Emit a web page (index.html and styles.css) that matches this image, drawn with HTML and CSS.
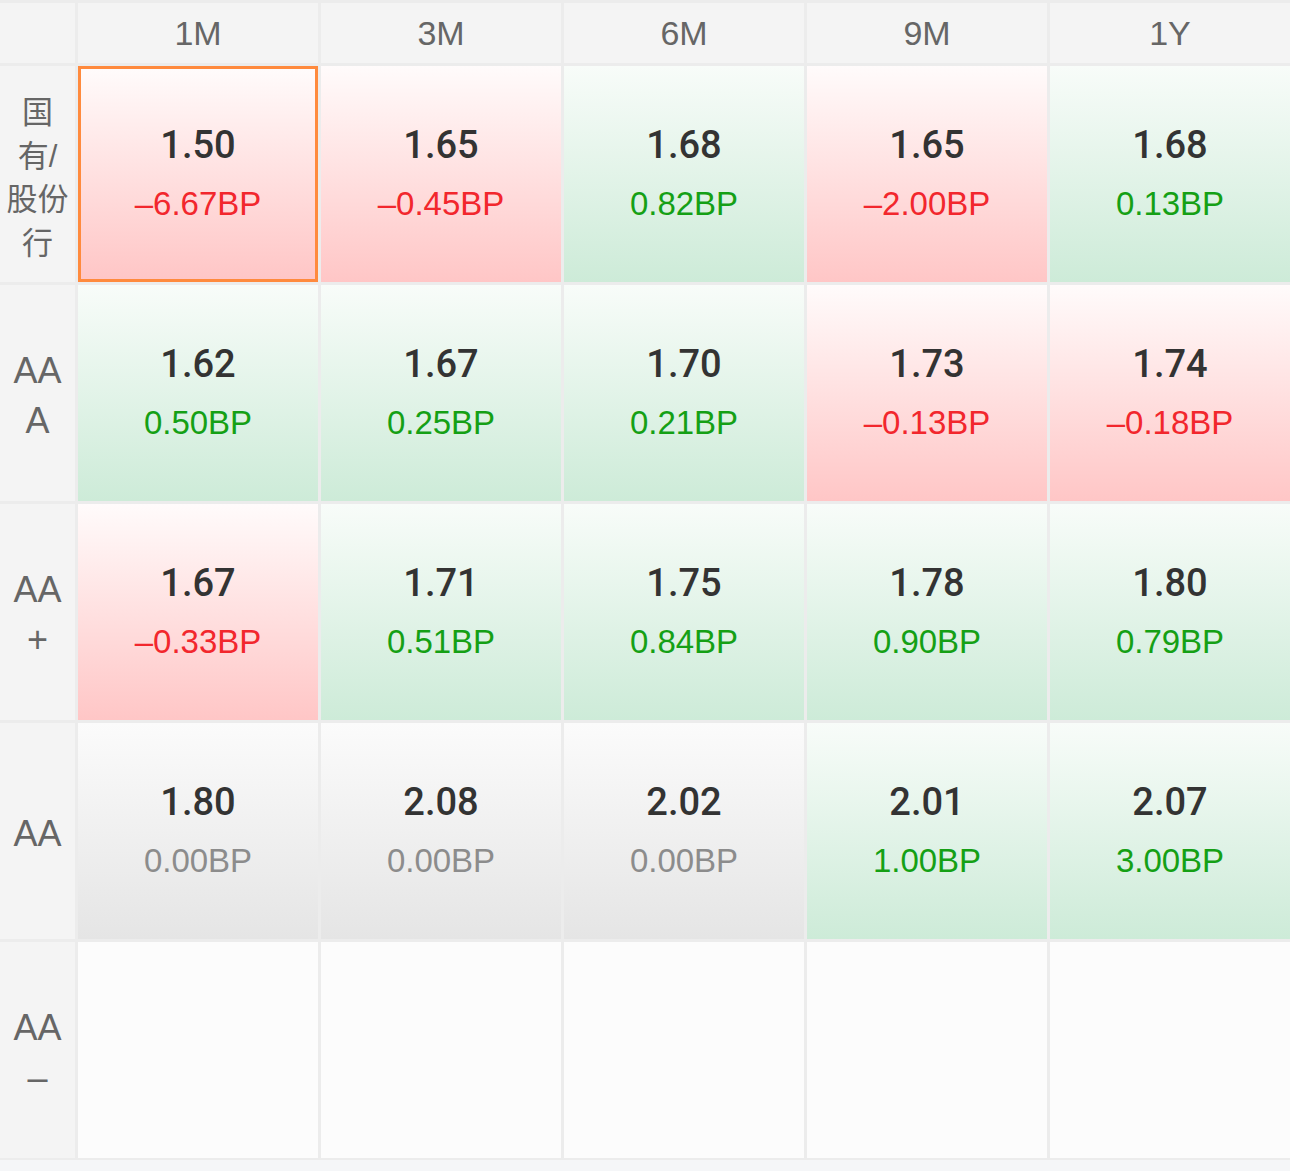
FILE: index.html
```html
<!DOCTYPE html>
<html lang="zh">
<head>
<meta charset="utf-8">
<title>收益率矩阵</title>
<link rel="stylesheet" href="styles.css">
</head>
<body>
<div class="matrix">
  <div class="corner"></div>
  <div class="col-head">1M</div>
  <div class="col-head">3M</div>
  <div class="col-head">6M</div>
  <div class="col-head">9M</div>
  <div class="col-head">1Y</div>

  <div class="row-head cjk">国<br>有/<br>股份<br>行</div>
  <div class="cell down selected"><div class="rate">1.50</div><div class="chg">–6.67BP</div></div>
  <div class="cell down"><div class="rate">1.65</div><div class="chg">–0.45BP</div></div>
  <div class="cell up"><div class="rate">1.68</div><div class="chg">0.82BP</div></div>
  <div class="cell down"><div class="rate">1.65</div><div class="chg">–2.00BP</div></div>
  <div class="cell up"><div class="rate">1.68</div><div class="chg">0.13BP</div></div>

  <div class="row-head">AA<br>A</div>
  <div class="cell up"><div class="rate">1.62</div><div class="chg">0.50BP</div></div>
  <div class="cell up"><div class="rate">1.67</div><div class="chg">0.25BP</div></div>
  <div class="cell up"><div class="rate">1.70</div><div class="chg">0.21BP</div></div>
  <div class="cell down"><div class="rate">1.73</div><div class="chg">–0.13BP</div></div>
  <div class="cell down"><div class="rate">1.74</div><div class="chg">–0.18BP</div></div>

  <div class="row-head">AA<br>+</div>
  <div class="cell down"><div class="rate">1.67</div><div class="chg">–0.33BP</div></div>
  <div class="cell up"><div class="rate">1.71</div><div class="chg">0.51BP</div></div>
  <div class="cell up"><div class="rate">1.75</div><div class="chg">0.84BP</div></div>
  <div class="cell up"><div class="rate">1.78</div><div class="chg">0.90BP</div></div>
  <div class="cell up"><div class="rate">1.80</div><div class="chg">0.79BP</div></div>

  <div class="row-head">AA</div>
  <div class="cell flat"><div class="rate">1.80</div><div class="chg">0.00BP</div></div>
  <div class="cell flat"><div class="rate">2.08</div><div class="chg">0.00BP</div></div>
  <div class="cell flat"><div class="rate">2.02</div><div class="chg">0.00BP</div></div>
  <div class="cell up"><div class="rate">2.01</div><div class="chg">1.00BP</div></div>
  <div class="cell up"><div class="rate">2.07</div><div class="chg">3.00BP</div></div>

  <div class="row-head">AA<br>–</div>
  <div class="cell empty"></div>
  <div class="cell empty"></div>
  <div class="cell empty"></div>
  <div class="cell empty"></div>
  <div class="cell empty"></div>
</div>
</body>
</html>
```
FILE: styles.css
```css
html, body {
  margin: 0;
  padding: 0;
  background: #f5f6f8;
}

body {
  font-family: "Liberation Sans", "Noto Sans CJK SC", sans-serif;
}

.matrix {
  display: grid;
  grid-template-columns: 75px repeat(5, 1fr);
  grid-template-rows: 60px repeat(5, 216px);
  column-gap: 3px;
  row-gap: 3px;
  padding: 3px 0 2px 0;
  background: #ececec;
}

.corner,
.col-head,
.row-head {
  background: #f4f4f4;
  color: #666;
}

.col-head {
  display: flex;
  align-items: center;
  justify-content: center;
  font-size: 34px;
}

.row-head {
  display: flex;
  align-items: center;
  justify-content: center;
  text-align: center;
  font-size: 36px;
  line-height: 50px;
  padding-top: 5px;
}

.row-head.cjk {
  font-size: 31px;
  line-height: 43.5px;
  padding-top: 8px;
}

.cell {
  display: flex;
  flex-direction: column;
  align-items: center;
  justify-content: center;
  box-sizing: border-box;
  padding-bottom: 2px;
}

.cell.up {
  background: linear-gradient(to bottom, #f8fcf9, #cdebd8);
}

.cell.down {
  background: linear-gradient(to bottom, #fffbfb, #ffc6c6);
}

.cell.flat {
  background: linear-gradient(to bottom, #fbfbfb, #e5e5e5);
}

.cell.empty {
  background: #fcfcfc;
}

.cell.selected {
  border: 3px solid #ff8a3d;
}

.rate {
  font-family: "Roboto", "Liberation Sans", sans-serif;
  font-weight: 500;
  font-size: 38px;
  line-height: 46px;
  color: #333;
}

.chg {
  font-size: 33px;
  line-height: 40px;
  margin-top: 16px;
}

.up .chg {
  color: #15a015;
}

.down .chg {
  color: #f2272d;
}

.flat .chg {
  color: #8c8c8c;
}
```
